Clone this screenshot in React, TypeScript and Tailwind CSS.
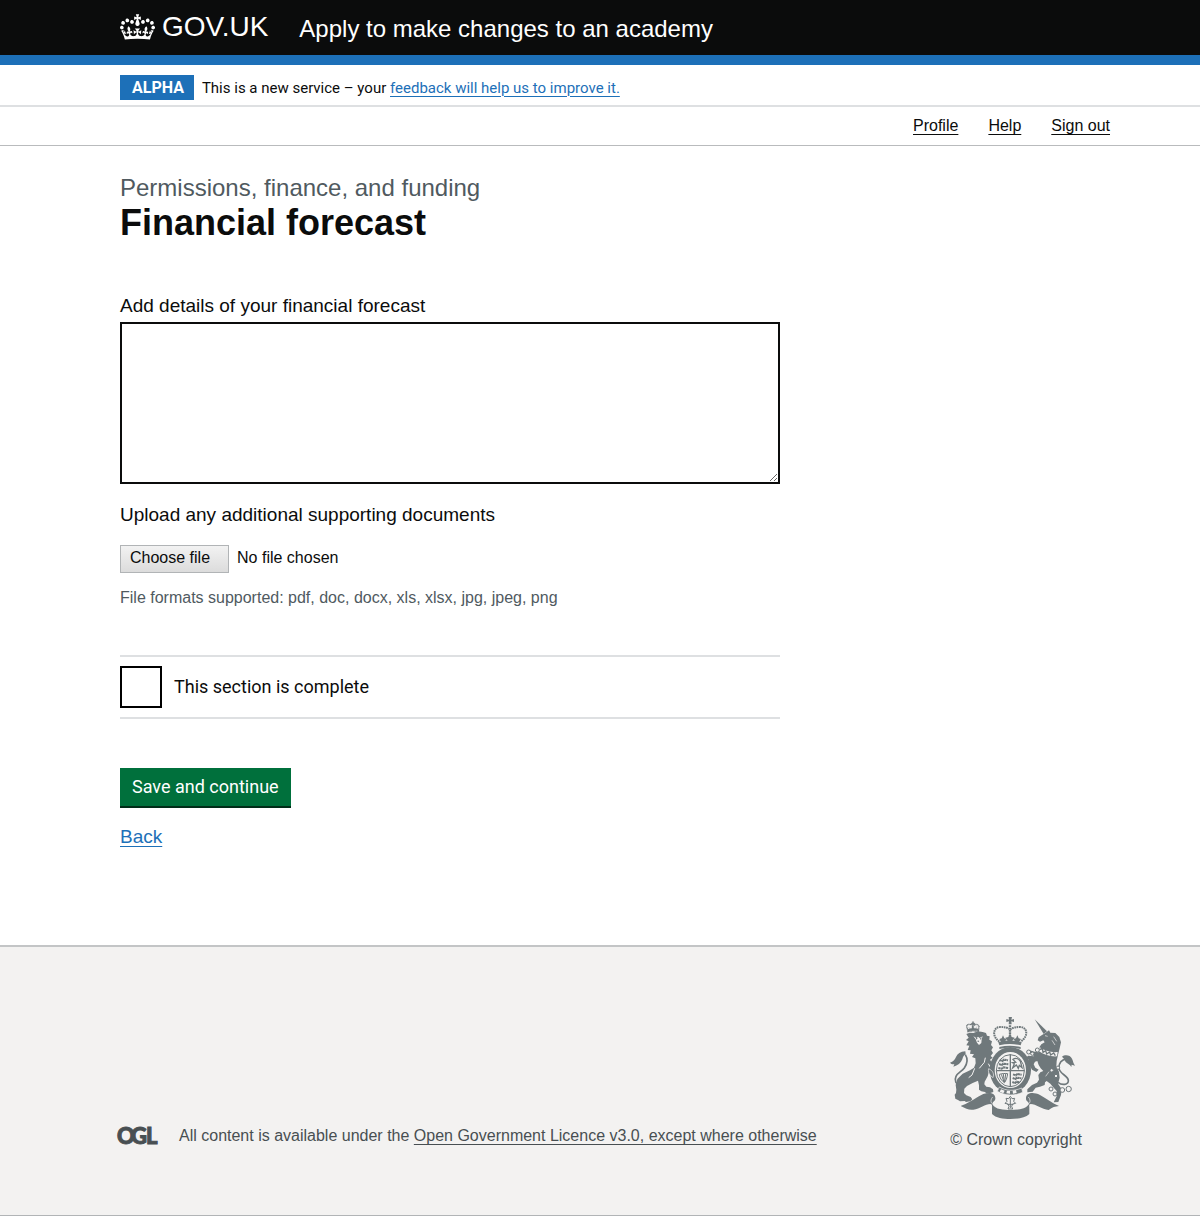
import React from "react";

const linkLine = "underline underline-offset-[3px] decoration-1";

function CrownLogo() {
  return (
    <svg aria-hidden="true" viewBox="0 0 132 97" className="h-[26px] w-[35px] fill-white">
      <path d="M25 30.2c3.5 1.5 7.7-.2 9.1-3.7 1.5-3.6-.2-7.8-3.9-9.2-3.6-1.4-7.6.3-9.1 3.9-1.4 3.5.3 7.5 3.9 9zM9 39.5c3.6 1.5 7.8-.2 9.2-3.7 1.5-3.6-.2-7.8-3.9-9.1-3.6-1.5-7.6.2-9.1 3.8-1.4 3.5.3 7.5 3.8 9zM4.4 57.2c3.5 1.5 7.7-.2 9.1-3.8 1.5-3.6-.2-7.7-3.9-9.1-3.5-1.5-7.6.3-9.1 3.8-1.4 3.5.3 7.6 3.9 9.1zm38.3-21.4c3.5 1.5 7.7-.2 9.1-3.8 1.5-3.6-.2-7.7-3.9-9.1-3.6-1.5-7.6.3-9.1 3.8-1.3 3.6.4 7.7 3.9 9.1zm64.4-5.6c-3.6 1.5-7.8-.2-9.1-3.7-1.5-3.6.2-7.8 3.8-9.2 3.6-1.4 7.7.3 9.2 3.9 1.3 3.5-.4 7.5-3.9 9zm15.9 9.3c-3.6 1.5-7.7-.2-9.1-3.7-1.5-3.6.2-7.8 3.7-9.1 3.6-1.5 7.7.2 9.2 3.8 1.5 3.5-.3 7.5-3.8 9zm4.7 17.7c-3.6 1.5-7.8-.2-9.2-3.8-1.5-3.6.2-7.7 3.9-9.1 3.6-1.5 7.7.3 9.2 3.8 1.3 3.5-.4 7.6-3.9 9.1zM89.3 35.8c-3.6 1.5-7.8-.2-9.2-3.8-1.4-3.6.2-7.7 3.9-9.1 3.6-1.5 7.7.3 9.2 3.8 1.4 3.6-.3 7.7-3.9 9.1zM69.7 17.7l8.9 4.7V9.3l-8.9 2.8c-.2-.3-.5-.6-.9-.9L72.4 0H59.6l3.5 11.2c-.3.3-.6.5-.9.9l-8.8-2.8v13.1l8.8-4.7c.3.3.6.7.9.9l-5 15.4v.1c-.2.8-.4 1.6-.4 2.4 0 4.1 3.1 7.5 7 8.1h.2c.3 0 .7.1 1 .1.4 0 .7 0 1-.1h.2c4-.6 7.1-4.1 7.1-8.1 0-.8-.1-1.7-.4-2.4V34l-5.1-15.4c.4-.2.7-.6 1-.9zM66 92.8c16.9 0 32.8 1.1 47.1 3.2 4-16.9 8.9-26.7 14-33.5l-9.6-3.4c1 4.9 1.1 7.2 0 10.2-1.5-1.4-3-4.3-4.2-8.7L108.6 76c2.8-2 5-3.2 7.5-3.3-4.4 9.4-10 11.9-13.6 11.2-4.3-.8-6.3-4.6-5.6-7.9 1-4.7 5.7-5.9 8-.5 4.3-8.7-3-11.4-7.6-8.8 7.1-7.2 7.9-13.5 2.1-21.1-8 6.1-8.1 12.3-4.5 20.8-4.7-5.4-12.1-2.5-9.5 6.2 3.4-5.2 7.9-2 7.2 3.1-.6 4.3-6.4 7.8-13.5 7.2-10.3-.9-10.9-8-11.2-13.8 2.5-.5 7.1 1.8 11 7.3L80.2 60c-4.1 4.4-8 5.3-12.3 5.4 1.4-4.4 8-11.6 8-11.6H55.5s6.4 7.2 7.9 11.6c-4.2-.1-8-1-12.3-5.4l1.4 16.4c3.9-5.5 8.5-7.7 10.9-7.3-.3 5.8-.9 12.8-11.1 13.8-7.2.6-12.9-2.9-13.5-7.2-.7-5 3.8-8.3 7.1-3.1 2.7-8.7-4.6-11.6-9.4-6.2 3.7-8.5 3.6-14.7-4.6-20.8-5.8 7.6-5 13.9 2.2 21.1-4.7-2.6-11.9.1-7.7 8.8 2.3-5.5 7.1-4.2 8.1.5.7 3.3-1.3 7.1-5.7 7.9-3.5.7-9-1.8-13.5-11.2 2.5.1 4.7 1.3 7.5 3.3l-4.7-15.4c-1.2 4.4-2.7 7.2-4.3 8.7-1.1-3-.9-5.3 0-10.2l-9.5 3.4c5 6.9 9.9 16.7 14 33.5 14.8-2.1 30.8-3.2 47.7-3.2z" />
    </svg>
  );
}

function RoyalArms() {
  const ink = "#6f787b";
  const paper = "#f3f2f1";
  return (
    <svg aria-hidden="true" viewBox="30 33 378 312" className="h-[104px] w-[126px]" fill={ink}>
      {/* lion */}
      <path d="M79 87l7 11-8 7 8 4-7 12 9 1-5 13 9 1-2 10 12 2-6 8 10 4 1 15-5 13-12 8-22 10-16 16-5 18 2 14-1 10-4 5 2 12 8 4 6 4 14-1 4 3 13-2 6-6-5-7-13-5-7-7 1-13 8-8 17-9 16-7 3 14 0 13 7 5 11 2 5 5 11-2 9-3-1-8-9-6-11-2-6-7 1-8 9-16 5-18 9 8 5 9 6-7-3-9-9-8-3-13 3-3-6-9 8-6-6-5 7-9-5-8 5-9-6-7 3-11-8-5 1-10-8-2-3-8-10-3-14-2-14 5-11-1z" />
      <path d="M100 94l10 5 4-4 5 4 9-5-3 9-1 11-7 6-6-7-4-10z" fill={paper} />
      <path d="M107 96l6 4-4 4zm12 5l7-4-4 7zm-5 4l4 6-6-1z" />
      <path d="M136 158l-3 14-15 18M104 190l-8 20-10 8M145 176l8 14" fill="none" stroke={paper} strokeWidth="3" />
      <path d="M61 242c-13-3-19-15-13-28 5-11 18-15 25-25 9-13 10-29 3-40" fill="none" stroke={ink} strokeWidth="5" />
      <path d="M76 139c-15 1-24 7-28 17-4 9-8 13-18 17 4 5 9 5 13 5l-3 7c13-3 23-11 27-22 2-8 5-12 10-15z" />
      {/* crown of the lion */}
      <path d="M84 80l-4-17c3-6 9-6 12-3 2-5 10-5 12 0 4-3 11-2 13 4l-2 16c-10-3-21-3-31 0z" fill="none" stroke={ink} strokeWidth="4" strokeDasharray="3 1" />
      <path d="M97 50h4v5h4v4h-11v-4h3zM84 73c10-4 22-4 31-1v6c-10-2-21-2-31 1zM96 61h5v14h-5zM86 66l5 7M111 64l-5 9" stroke={ink} strokeWidth="1" />
      {/* unicorn */}
      <path d="M284 43L321 79L311 87Z" />
      <path d="M316 84L327 76L331 83L346 84L358 96L363 112L359 130L354 150L350 168L349 185L357 200L359 218L354 236L365 252L363 270L355 291L341 292L350 274L350 258L339 246L331 236L320 228L315 232L314 240L300 245L287 248L278 260L262 262L262 253L276 240L291 233L297 224L295 210L301 202L310 198L302 190L296 180L292 168L285 170L281 178L286 188L296 194L289 201L276 194L267 178L267 165L259 158L264 152L282 154L276 147L262 141L266 135L284 140L296 142L296 130L304 118L314 112L310 106L300 110L293 106L296 97L306 90Z" />
      <path d="M298 126c16 11 35 17 55 15l-2 13c-21 1-38-4-54-15z" fill={paper} />
      <path d="M299 134l8-4 2 12 8-5 3 10 9-6 3 9 9-6 5 8" fill="none" stroke={ink} strokeWidth="4" />
      <path d="M315 92l8 2M341 95l9 14M336 106l9 14M327 200l-10 14" stroke={paper} strokeWidth="2" />
      <path d="M354 232c12 10 32 8 31-6-1-16-29-19-28-38 0-17 10-24 22-26" fill="none" stroke={ink} strokeWidth="5" />
      <path d="M366 155c9-7 25-5 30 6 4 7 3 13 9 21l-10-3-1 7c-5-8-10-9-17-15l-4-8z" />
      {/* chain */}
      <g fill={paper} stroke={ink} strokeWidth="3">
        <circle cx="292" cy="135" r="6" />
        <circle cx="277" cy="146" r="5" />
        <circle cx="266" cy="141" r="6" />
        <circle cx="335" cy="196" r="5" />
        <circle cx="354" cy="188" r="5" />
        <circle cx="348" cy="213" r="5" />
        <circle cx="333" cy="252" r="6" />
        <circle cx="345" cy="267" r="6" />
        <circle cx="367" cy="255" r="7" />
        <circle cx="386" cy="252" r="8" />
      </g>
      {/* central crown */}
      <path d="M206 36h10l-2 8 8-2v9l-8-2 1 9h-9l1-9-8 2v-9l8 2z" />
      <path d="M178 110c-24-17-18-44 3-44 13 0 23 2 29 8 7-6 17-8 30-8 22 0 27 27 2 44" fill="none" stroke={ink} strokeWidth="6" strokeDasharray="5 2" />
      <path d="M210 61v46" stroke={ink} strokeWidth="7" strokeDasharray="5 2" />
      <path d="M175 112c23-7 47-7 70 0l-3 9c-21-5-43-5-64 0zM178 126c21-5 43-5 64 0v6c-21-6-43-6-64 0z" />
      <path d="M189 91l4 9 7 2-6 9h-11l-5-9 7-2zM210 85l5 11 9 2-8 11h-12l-8-11 9-2zM232 91l4 9 7 2-6 9h-11l-5-9 7-2z" />
      {/* garter and shield */}
      <ellipse cx="211" cy="195" rx="62" ry="69" />
      <ellipse cx="211" cy="195" rx="47" ry="54" fill={paper} />
      <ellipse cx="211" cy="197" rx="42" ry="48" fill="none" stroke={ink} strokeWidth="3" />
      <path d="M211 148v98M169 197h85" stroke={ink} strokeWidth="4" />
      <path d="M179 165l8 3 5-4 12 2M177 177l8 3 5-4 15 2M175 189l10 2 5-4 15 2" fill="none" stroke={ink} strokeWidth="6" strokeDasharray="7 1" />
      <path d="M219 208l8 3 5-4 13 2M218 219l8 3 5-4 13 2M217 231l8 3 5-4 10 2" fill="none" stroke={ink} strokeWidth="6" strokeDasharray="7 1" />
      <path d="M219 163c8-5 17-2 22 5l5 20-8-7-3 9-6-10-11 9 5-13-5-3 9-1z" fill="none" stroke={ink} strokeWidth="4" />
      <path d="M178 208c9-3 18-3 25-2-2 14-5 21-10 27-9-7-14-14-15-25zM184 208l8 23M190 207l3 24M197 207l-3 25" fill="none" stroke={ink} strokeWidth="3" />
      <path d="M146 191c13 6 17 16 13 27l-8-7c-5-6-7-13-5-20z" stroke={paper} strokeWidth="2" />
      <path d="M178 246c20 12 44 13 67 3l3 13c-24 11-52 11-76-3z" stroke={paper} strokeWidth="2" />
      <path d="M183 253l11 4-4 8-11-5zM201 257l9 1v8l-11-1zM218 257l10-2 2 9-11 2z" fill={paper} />
      {/* plant badge */}
      <path d="M211 274l5 7 8-1-3 9 6 6-9 2-3 7 3 8h-14l3-8-3-7-9-2 6-6-3-9 8 1zM211 279v30M202 298h18" fill={paper} stroke={ink} strokeWidth="3" />
      {/* ribbon */}
      <path d="M62 303c18-6 44-23 62-33 20-10 43-8 42 11-1 8-9 9-9 16 8 17 35 18 55 18s46-2 55-18c0-7-9-8-9-16-1-19 22-21 42-11 18 10 38 26 57 33-12 1-20 4-31 12-21-3-38-18-54-18-4 0-5 4-4 9v21c-12 12-36 15-57 15s-44-3-55-15v-21c1-6-1-9-5-9-15 0-31 15-51 17-13 2-22-3-38-11z" />
      <path d="M158 276c-5 6-7 12-3 19M265 276c5 6 7 12 3 19" fill="none" stroke={paper} strokeWidth="2" />
    </svg>
  );
}

function OglLogo() {
  return (
    <svg role="img" aria-label="Open Government Licence" viewBox="0 0 42 24" className="h-6 w-[42px] shrink-0 overflow-visible">
      <text x="0 14 29" y="20" fontFamily="Lato, sans-serif" fontWeight="900" fontSize="22" fill="#484f52" stroke="#484f52" strokeWidth="1">OGL</text>
    </svg>
  );
}

export default function App() {
  return (
    <div className="bg-white font-['Liberation_Sans',Arial,sans-serif] text-[#0b0c0c]">
      <header className="border-b-10 border-[#1d70b8] bg-[#0b0c0c] text-white">
        <div className="mx-auto flex h-[55px] max-w-[960px] items-center pb-[2px]">
          <a href="#" className="flex items-center gap-[7px] text-[28px] leading-[30px]">
            <CrownLogo />
            GOV.UK
          </a>
          <a href="#" className="ml-[31px] pt-1 text-2xl leading-[30px]">Apply to make changes to an academy</a>
        </div>
      </header>

      <div className="border-b-2 border-[#dee0e2] font-['Roboto',sans-serif]">
        <div className="mx-auto flex h-10 max-w-[960px] items-center pt-[5px]">
          <strong className="bg-[#1d70b8] pr-[10px] pl-3 text-base leading-[25px] font-bold text-white">ALPHA</strong>
          <p className="ml-2 text-[15px] leading-5">
            This is a new service – your{" "}
            <a href="#" className={`${linkLine} text-[#1d70b8]`}>feedback will help us to improve it.</a>
          </p>
        </div>
      </div>

      <nav className="border-b border-[#b9bbbd]">
        <div className="flex h-[38px] items-center justify-end gap-[30px] pr-[90px] text-base">
          <a href="#" className={linkLine}>Profile</a>
          <a href="#" className={linkLine}>Help</a>
          <a href="#" className={linkLine}>Sign out</a>
        </div>
      </nav>

      <main className="mx-auto max-w-[960px] pt-[27px] pb-[95px]">
        <form className="max-w-[660px]">
          <span className="block text-2xl leading-[30px] text-[#505a5f]">Permissions, finance, and funding</span>
          <h1 className="text-4xl leading-10 font-bold">Financial forecast</h1>

          <label htmlFor="details" className="mt-[50px] block text-[19px] leading-[25px]">Add details of your financial forecast</label>
          <textarea id="details" className="mt-1 block h-[162px] w-full resize-y border-2 border-[#0b0c0c] p-1 text-[19px]" />

          <div className="mt-[18px] text-[19px] leading-[25px]">Upload any additional supporting documents</div>
          <label className="relative mt-[18px] flex w-fit items-center gap-2 text-base leading-5">
            <span className="border border-[#b1b4b6] bg-linear-to-b from-[#f2f2f2] to-[#dcdcdc] pt-[2px] pr-[18px] pb-1 pl-[9px]">Choose file</span>
            <span className="pb-[2px]">No file chosen</span>
            <input type="file" accept=".pdf,.doc,.docx,.xls,.xlsx,.jpg,.jpeg,.png" className="absolute inset-0 opacity-0" />
          </label>
          <p className="mt-[15px] text-base leading-5 text-[#505a5f]">File formats supported: pdf, doc, docx, xls, xlsx, jpg, jpeg, png</p>

          <div className="mt-[47px] flex items-center gap-3 border-y-2 border-[#dee0e2] py-[9px] font-['Roboto',sans-serif] text-lg leading-6">
            <input id="complete" type="checkbox" className="h-[42px] w-[42px] appearance-none border-2 border-black" />
            <label htmlFor="complete">This section is complete</label>
          </div>

          <button type="button" className="mt-[49px] block border-b-2 border-[#002d18] bg-[#00703c] px-3 py-[7px] font-['Roboto',sans-serif] text-lg leading-6 text-white">Save and continue</button>
          <a href="#" className={`${linkLine} mt-4 inline-block text-[19px] leading-[25px] text-[#1d70b8]`}>Back</a>
        </form>
      </main>

      <footer className="border-t-2 border-b border-t-[#c3c5c6] border-b-[#b1b4b6] bg-[#f3f2f1] text-base leading-5 text-[#484f52]">
        <div className="mx-auto flex max-w-[960px] items-end justify-between pt-[69px] pb-[65px]">
          <div className="-ml-[3px] flex items-center gap-5 pb-[2px]">
            <OglLogo />
            <p>
              All content is available under the{" "}
              <a href="#" className={linkLine}>Open Government Licence v3.0, except where otherwise</a>
            </p>
          </div>
          <a href="#" className="-mr-[2px] flex flex-col gap-[10px]">
            <RoyalArms />
            © Crown copyright
          </a>
        </div>
      </footer>
    </div>
  );
}
